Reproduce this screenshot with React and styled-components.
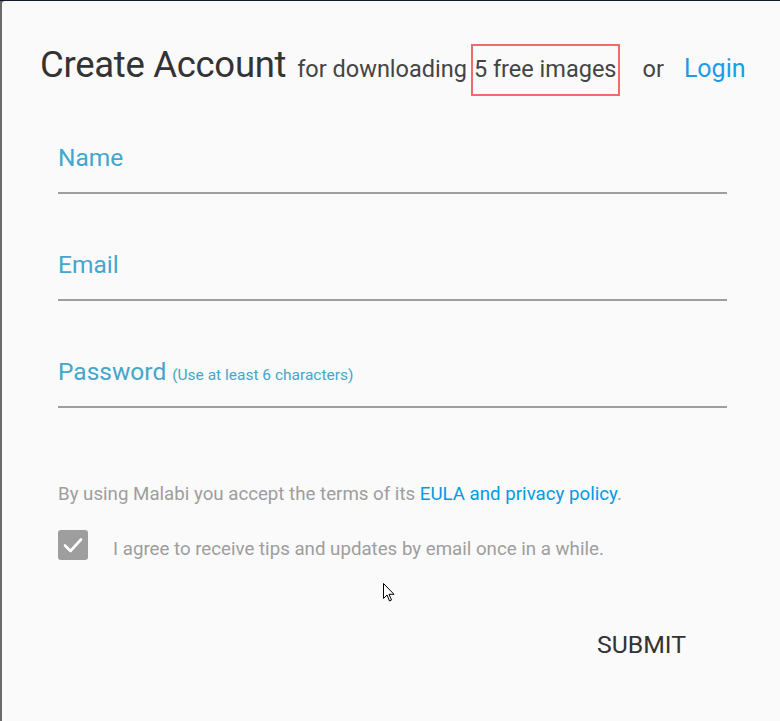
import React, { useState } from 'react';
import styled, { createGlobalStyle } from 'styled-components';

const GlobalStyle = createGlobalStyle`
  html, body {
    margin: 0;
    padding: 0;
    background: #0d1b2a;
  }
  body {
    font-family: Roboto, 'Liberation Sans', sans-serif;
  }
`;

//Outer frame with the dark edges seen round the dialog
const Frame = styled.div`
  width: 780px;
  height: 721px;
  box-sizing: border-box;
  padding-top: 1px;
  padding-left: 2px;
  background: linear-gradient(#0d1b2a 0 1px, #6b6b6b 1px);
  position: relative;
  overflow: hidden;
`;

//Dialog surface
const Dialog = styled.div`
  height: 100%;
  background: #fafafa;
  border-top-left-radius: 3px;
  box-sizing: border-box;
  padding: 42px 20px 0 38px;
`;

const TitleRow = styled.div`
  display: flex;
  align-items: baseline;
  white-space: nowrap;
`;

const Title = styled.h1`
  margin: 0;
  font-size: 36.5px;
  font-weight: 400;
  color: #333;
  letter-spacing: -0.3px;
`;

const Sub = styled.span`
  font-size: 23.5px;
  color: #444;
  margin-left: 11px;
`;

const Highlight = styled.span`
  font-size: 23.5px;
  color: #444;
  padding: 9px 1px 11px 1px;
  margin-left: 4px;
  border: 2px solid #f06b6b;
`;

const Or = styled.span`
  font-size: 23.5px;
  color: #444;
  margin-left: 23px;
`;

const LoginLink = styled.a`
  font-size: 25px;
  color: #1e9be6;
  margin-left: 20px;
  text-decoration: none;
  cursor: pointer;
`;

const Form = styled.form`
  display: flex;
  flex-direction: column;
  padding: 36px 33px 0 18px;
`;

const Field = styled.label`
  display: flex;
  align-items: baseline;
  box-sizing: border-box;
  height: 62px;
  padding-top: 11px;
  border-bottom: 2px solid #9e9e9e;
  margin-bottom: 45px;
  cursor: text;
`;

const FieldLabel = styled.span`
  font-size: 24.5px;
  color: #44a6cc;
`;

const Hint = styled.span`
  font-size: 15.5px;
  color: #44a6cc;
  margin-left: 6px;
`;

const Terms = styled.p`
  margin: 30px 0 0;
  font-size: 18.7px;
  color: #9e9e9e;
`;

const TermsLink = styled.a`
  color: #039be5;
  text-decoration: none;
`;

const CheckRow = styled.div`
  display: flex;
  align-items: center;
  margin-top: 25px;
  cursor: pointer;
`;

const Box = styled.span`
  width: 30px;
  height: 30px;
  border-radius: 3px;
  background: ${p => (p.checked ? '#9e9e9e' : 'transparent')};
  border: ${p => (p.checked ? 'none' : '2px solid #9e9e9e')};
  box-sizing: border-box;
  display: flex;
  align-items: center;
  justify-content: center;
  flex-shrink: 0;
`;

const CheckText = styled.span`
  font-size: 18.7px;
  color: #9e9e9e;
  margin: 8px 0 0 25px;
`;

const Actions = styled.div`
  display: flex;
  justify-content: flex-end;
  margin-top: 64px;
  padding-right: 41px;
`;

const SubmitButton = styled.button`
  background: none;
  border: none;
  font-family: Roboto, 'Liberation Sans', sans-serif;
  font-size: 24.8px;
  color: #333;
  padding: 6px 0;
  cursor: pointer;
`;

//Mouse pointer caught in the screenshot
const Pointer = styled.svg`
  position: absolute;
  left: 383px;
  top: 583px;
`;

const App = () => {
  const [agree, setAgree] = useState(true);

  return (
    <>
      <GlobalStyle />
      <Frame>
        <Dialog>
          <TitleRow>
            <Title>Create Account</Title>
            <Sub>for downloading</Sub>
            <Highlight>5 free images</Highlight>
            <Or>or</Or>
            <LoginLink>Login</LoginLink>
          </TitleRow>

          <Form onSubmit={e => e.preventDefault()}>
            <Field>
              <FieldLabel>Name</FieldLabel>
            </Field>
            <Field>
              <FieldLabel>Email</FieldLabel>
            </Field>
            <Field>
              <FieldLabel>Password</FieldLabel>
              <Hint>(Use at least 6 characters)</Hint>
            </Field>

            <Terms>
              By using Malabi you accept the terms of its <TermsLink>EULA and privacy policy</TermsLink>.
            </Terms>

            <CheckRow onClick={() => setAgree(!agree)}>
              <Box checked={agree}>
                {agree && (
                  <svg width="20" height="16" viewBox="0 0 20 16">
                    <path d="M2 8.5 L7.5 14 L18 2.5" fill="none" stroke="#fff" strokeWidth="2.6" strokeLinecap="round" strokeLinejoin="round" />
                  </svg>
                )}
              </Box>
              <CheckText>I agree to receive tips and updates by email once in a while.</CheckText>
            </CheckRow>

            <Actions>
              <SubmitButton type="submit">SUBMIT</SubmitButton>
            </Actions>
          </Form>
        </Dialog>
        <Pointer width="12" height="19" viewBox="0 0 12 19">
          <path d="M0.5 0.5 L0.5 15.5 L4 12 L6.5 18 L8.5 17 L6 11.3 L11 11.3 Z" fill="#fff" stroke="#000" strokeWidth="1" strokeLinejoin="round" />
        </Pointer>
      </Frame>
    </>
  );
};

export default App;
